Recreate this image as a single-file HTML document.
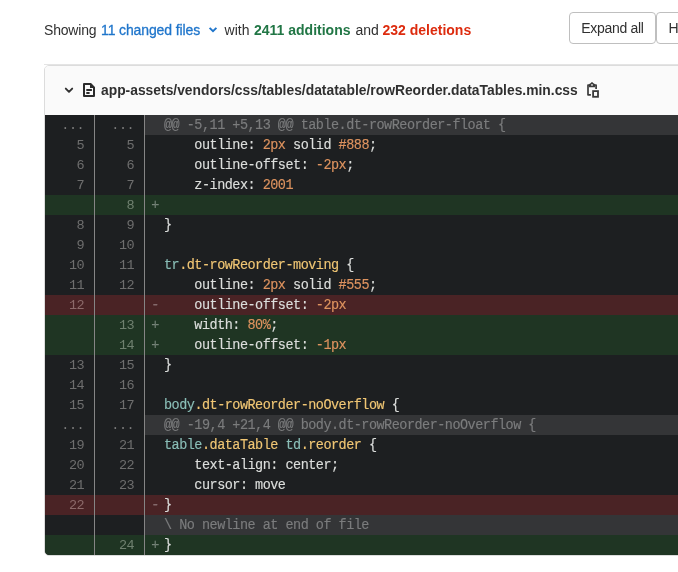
<!DOCTYPE html>
<html>
<head>
<meta charset="utf-8">
<style>
*{box-sizing:border-box;margin:0;padding:0}
html,body{width:678px;height:572px;overflow:hidden;background:#fff}
#wrap{position:absolute;left:0;top:0;width:678px;height:572px;will-change:transform}
body{font-family:"Liberation Sans",sans-serif;font-size:14px;color:#303030;position:relative}
.top{position:absolute;left:0;top:21px;height:18px;line-height:18px;white-space:nowrap;font-size:14px;color:#303030}
.sg{position:absolute;top:0}
.top .lnk{color:#1f75cb}
.top .add{color:#217645;font-weight:bold}
.top .del{color:#dd2b0e;font-weight:bold}
.btn{position:absolute;top:12px;height:32px;border:1px solid #bfbfbf;border-radius:4px;background:#fff;font-size:14px;letter-spacing:-0.3px;line-height:30px;color:#303030;white-space:nowrap}
.b1{left:569px;width:87px;text-align:center}
.b2{left:656px;width:120px;padding-left:11.5px;border-top-left-radius:4px;border-bottom-left-radius:4px}
.topline{position:absolute;left:44px;top:64px;width:700px;height:1px;background:#e4e4e4}
.file{position:absolute;left:44px;top:65px;width:700px;height:491px;border:1px solid #dcdcdc;border-radius:5px;background:#fafafa;overflow:hidden}
.hdr{position:absolute;left:0;top:-1px;width:100%;height:50px;background:#fafafa}
.hdr .chev{position:absolute;left:19px;top:20px}
.hdr .doc{position:absolute;left:37px;top:17px}
.hdr .name{position:absolute;left:56px;top:16px;font-weight:bold;font-size:13.85px;line-height:18px;color:#303030;white-space:nowrap}
.hdr .clip{position:absolute;left:541px;top:16px}
.code{position:absolute;left:0;top:49px;border-radius:0 0 0 4px;overflow:hidden;width:100%;background:#1d1f21;font-family:"Liberation Mono",monospace;font-size:13.5px;letter-spacing:-0.511px}
.r{height:20px;line-height:22px;overflow:hidden;white-space:pre;display:flex;color:#dcdedc}
.r .n{width:50px;flex:none;text-align:right;padding-right:9.9px;color:#6e6e6e;border-right:1px solid #858585}
.r .c{flex:1;position:relative;padding-left:19px;-webkit-text-stroke:0.15px;transform:scaleY(1.1);transform-origin:0 15px}
.r .c i{position:absolute;left:6.2px;font-style:normal;color:rgba(255,255,255,.32)}
.m{background:linear-gradient(to right,transparent 100px,#343537 100px)}
.m .c{color:#7b7c7d}
.m .n{color:#7a7a7a}
.o{background:#4a2325}
.o .n{color:#8c6a6a}
.w{background:#1f3523}
.w .n{color:#6f806f}
.t{color:#8abeb7}.y{color:#f0c674}.g{color:#de935f}
</style>
</head>
<body>
<div id="wrap">
<div class="top">
<span class="sg" style="left:44px;letter-spacing:-0.2px">Showing</span>
<span class="sg lnk" style="left:101px;letter-spacing:-0.12px;-webkit-text-stroke:0.3px">11 changed files</span>
<svg style="position:absolute;left:208px;top:5px" width="10" height="8" viewBox="0 0 10 8"><path d="M1.6 1.8 L5 5.2 L8.4 1.8" fill="none" stroke="#1f75cb" stroke-width="1.9"/></svg>
<span class="sg" style="left:224.6px">with</span>
<span class="sg add" style="left:254px">2411 additions</span>
<span class="sg" style="left:355.5px">and</span>
<span class="sg del" style="left:382.5px">232 deletions</span>
</div>
<div class="btn b1">Expand all</div>
<div class="btn b2">Hide whitespace changes</div>
<div class="topline"></div>
<div class="file">
<div class="hdr">
<div class="name">app-assets/vendors/css/tables/datatable/rowReorder.dataTables.min.css</div>
</div>
<div class="code">
<div class="r m"><span class="n">...</span><span class="n">...</span><span class="c">@@ -5,11 +5,13 @@ table.dt-rowReorder-float {</span></div>
<div class="r"><span class="n">5</span><span class="n">5</span><span class="c">    outline: <span class="g">2px</span> solid <span class="g">#888</span>;</span></div>
<div class="r"><span class="n">6</span><span class="n">6</span><span class="c">    outline-offset: <span class="g">-2px</span>;</span></div>
<div class="r"><span class="n">7</span><span class="n">7</span><span class="c">    z-index: <span class="g">2001</span></span></div>
<div class="r w"><span class="n"></span><span class="n">8</span><span class="c"><i>+</i></span></div>
<div class="r"><span class="n">8</span><span class="n">9</span><span class="c">}</span></div>
<div class="r"><span class="n">9</span><span class="n">10</span><span class="c"></span></div>
<div class="r"><span class="n">10</span><span class="n">11</span><span class="c"><span class="t">tr</span><span class="y">.dt-rowReorder-moving</span> {</span></div>
<div class="r"><span class="n">11</span><span class="n">12</span><span class="c">    outline: <span class="g">2px</span> solid <span class="g">#555</span>;</span></div>
<div class="r o"><span class="n">12</span><span class="n"></span><span class="c"><i>-</i>    outline-offset: <span class="g">-2px</span></span></div>
<div class="r w"><span class="n"></span><span class="n">13</span><span class="c"><i>+</i>    width: <span class="g">80%</span>;</span></div>
<div class="r w"><span class="n"></span><span class="n">14</span><span class="c"><i>+</i>    outline-offset: <span class="g">-1px</span></span></div>
<div class="r"><span class="n">13</span><span class="n">15</span><span class="c">}</span></div>
<div class="r"><span class="n">14</span><span class="n">16</span><span class="c"></span></div>
<div class="r"><span class="n">15</span><span class="n">17</span><span class="c"><span class="t">body</span><span class="y">.dt-rowReorder-noOverflow</span> {</span></div>
<div class="r m"><span class="n">...</span><span class="n">...</span><span class="c">@@ -19,4 +21,4 @@ body.dt-rowReorder-noOverflow {</span></div>
<div class="r"><span class="n">19</span><span class="n">21</span><span class="c"><span class="t">table</span><span class="y">.dataTable</span> <span class="t">td</span><span class="y">.reorder</span> {</span></div>
<div class="r"><span class="n">20</span><span class="n">22</span><span class="c">    text-align: center;</span></div>
<div class="r"><span class="n">21</span><span class="n">23</span><span class="c">    cursor: move</span></div>
<div class="r o"><span class="n">22</span><span class="n"></span><span class="c"><i>-</i>}</span></div>
<div class="r m"><span class="n"></span><span class="n"></span><span class="c">\ No newline at end of file</span></div>
<div class="r w"><span class="n"></span><span class="n">24</span><span class="c"><i>+</i>}</span></div>
</div>
</div>
<svg style="position:absolute;left:0;top:0" width="678" height="572" viewBox="0 0 678 572">
<path d="M65.8 88.6 L69 91.8 L72.2 88.6" fill="none" stroke="#303030" stroke-width="1.9" stroke-linecap="round" stroke-linejoin="round"/>
<path d="M84 84 H90.6 L94 87.4 V96 H84 Z" fill="none" stroke="#2b2b2b" stroke-width="2" stroke-linejoin="round"/>
<path d="M90 84 V88 H94 Z" fill="#2b2b2b"/>
<path d="M86.3 90 H91.9 M86.3 93 H89.6" stroke="#2b2b2b" stroke-width="1.9"/>
<path d="M590.9 94.8 H588 V85 H596.1 V89" fill="none" stroke="#3a3a3a" stroke-width="1.7" stroke-linejoin="round"/>
<path d="M589 87.2 V84.4 L590.2 83.2 H590.9 Q592 81 593.1 83.2 H593.8 L595 84.4 V87.2 Z" fill="#3a3a3a"/>
<circle cx="592" cy="84.9" r="0.85" fill="#f0f0f0"/>
<rect x="593.1" y="91.1" width="4.9" height="5.7" fill="none" stroke="#3a3a3a" stroke-width="1.8"/>
</svg>
</div>
</body>
</html>
